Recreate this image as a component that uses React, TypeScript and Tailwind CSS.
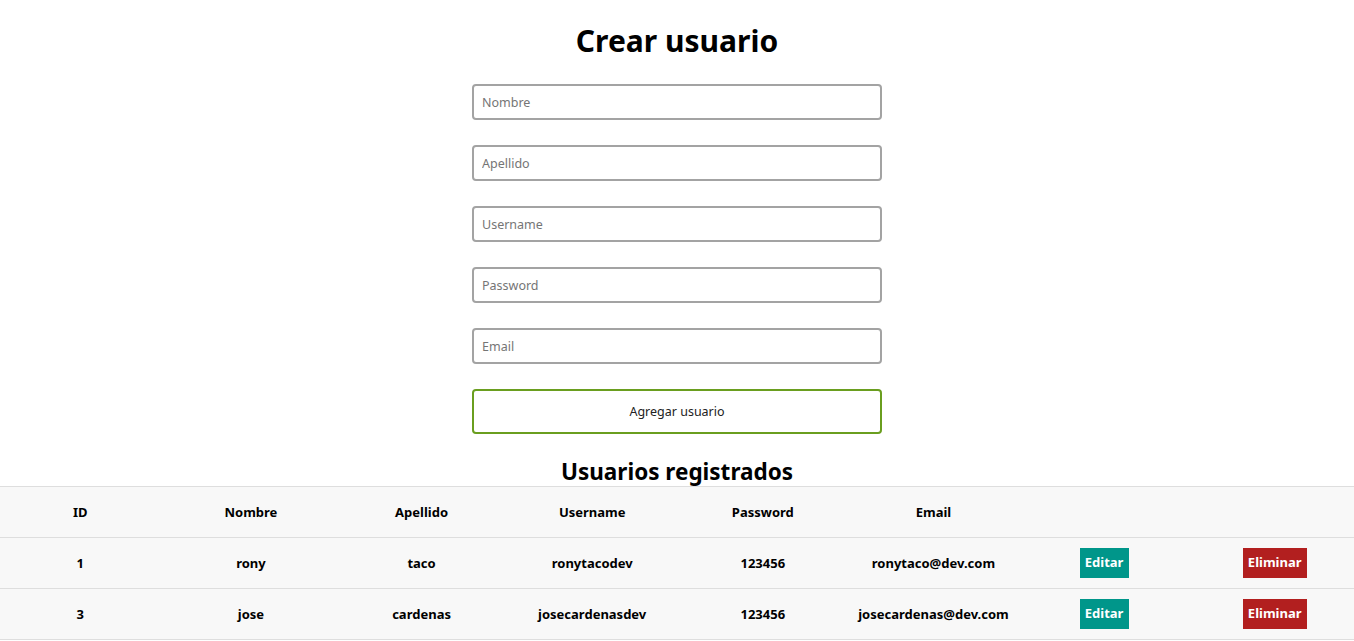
import React from 'react';

interface Usuario {
    id: number;
    nombre: string;
    apellido: string;
    username: string;
    password: string;
    email: string;
}

const usuarios: Usuario[] = [
    { id: 1, nombre: 'rony', apellido: 'taco', username: 'ronytacodev', password: '123456', email: 'ronytaco@dev.com' },
    { id: 3, nombre: 'jose', apellido: 'cardenas', username: 'josecardenasdev', password: '123456', email: 'josecardenas@dev.com' },
];

const campos = ['Nombre', 'Apellido', 'Username', 'Password', 'Email'];

export default function App() {
    return (
        <div className="min-h-screen bg-white text-black font-['Noto_Sans',sans-serif]">
            <h1 className="pt-[18px] text-center text-[30px] font-bold leading-[46px]">Crear usuario</h1>

            {/* Formulario */}
            <form className="mx-auto mt-[20px] flex w-[410px] flex-col gap-[25px]" onSubmit={e => e.preventDefault()}>
                {campos.map(campo => (
                    <input
                        key={campo}
                        type={campo === 'Password' ? 'password' : 'text'}
                        placeholder={campo}
                        className="h-[36px] rounded-[4px] border-2 border-[#a3a3a3] px-[8px] pt-[1px] text-[12.5px] placeholder:text-[#757575] outline-none"
                    />
                ))}
                <button
                    type="submit"
                    className="h-[45px] rounded-[4px] border-2 border-[#6a9e1f] bg-white pt-[2px] text-[12.5px] text-[#222]"
                >
                    Agregar usuario
                </button>
            </form>

            <h2 className="mt-[25px] text-center text-[22.5px] font-bold leading-[26px]">Usuarios registrados</h2>

            {/* Tabla */}
            <div className="mt-[1px] overflow-hidden border-t border-[#dedede]">
                <table className="-ml-[5px] w-[1365px] table-fixed border-collapse bg-[#f8f8f8] text-[13px] font-bold">
                    <thead>
                        <tr className="h-[50px] border-b border-[#dedede]">
                            <th className="pt-[2px]">ID</th>
                            <th className="pt-[2px]">Nombre</th>
                            <th className="pt-[2px]">Apellido</th>
                            <th className="pt-[2px]">Username</th>
                            <th className="pt-[2px]">Password</th>
                            <th className="pt-[2px]">Email</th>
                            <th></th>
                            <th></th>
                        </tr>
                    </thead>
                    <tbody>
                        {usuarios.map(u => (
                            <tr key={u.id} className="h-[51px] border-b border-[#dedede] text-center">
                                <td className="pt-[3px]">{u.id}</td>
                                <td className="pt-[3px]">{u.nombre}</td>
                                <td className="pt-[3px]">{u.apellido}</td>
                                <td className="pt-[3px]">{u.username}</td>
                                <td className="pt-[3px]">{u.password}</td>
                                <td className="pt-[3px]">{u.email}</td>
                                <td>
                                    <button className="h-[30px] w-[49px] bg-[#00968a] pt-[1px] text-white">Editar</button>
                                </td>
                                <td>
                                    <button className="h-[30px] w-[64px] bg-[#b21f1f] pt-[1px] text-white">Eliminar</button>
                                </td>
                            </tr>
                        ))}
                    </tbody>
                </table>
            </div>
        </div>
    );
}
